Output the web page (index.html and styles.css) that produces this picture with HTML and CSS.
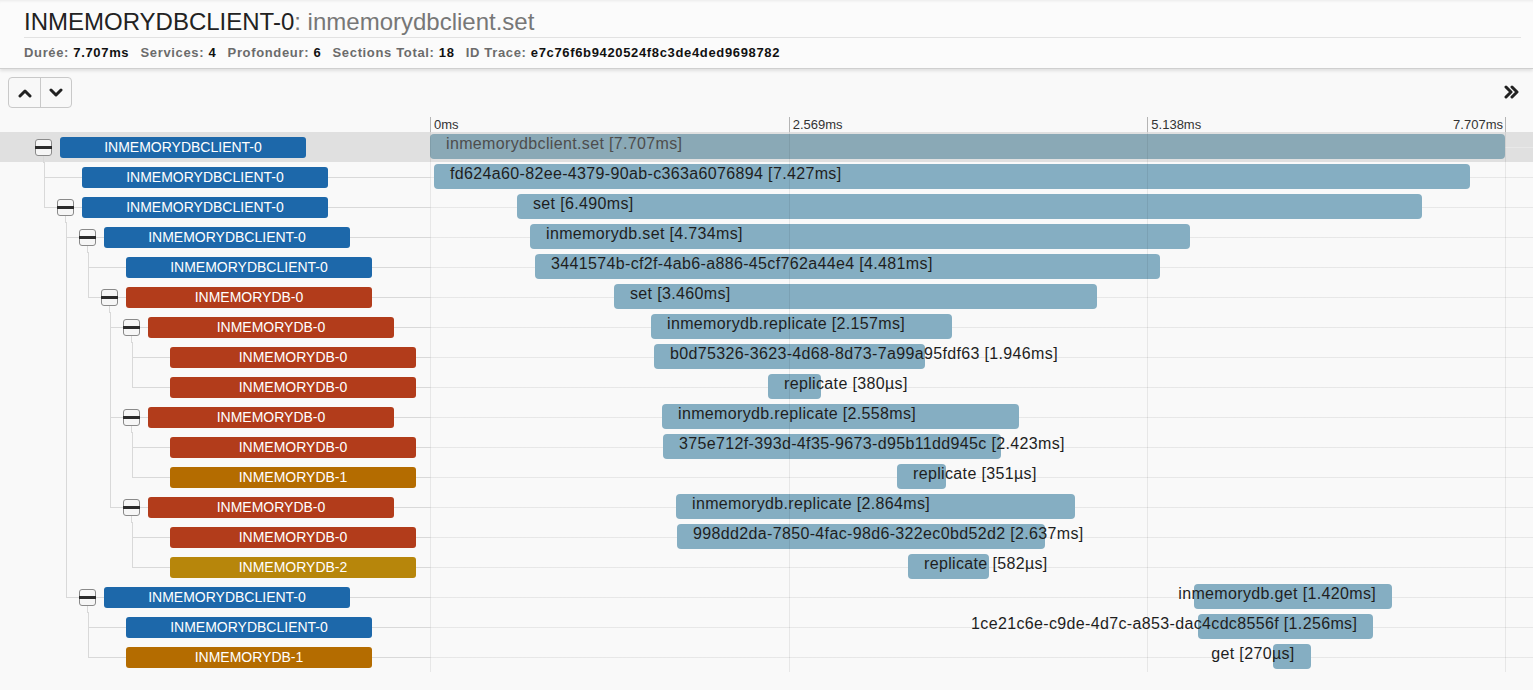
FILE: index.html
```html
<!DOCTYPE html>
<html lang="fr">
<head>
<meta charset="utf-8">
<title>INMEMORYDBCLIENT-0: inmemorydbclient.set</title>
<link rel="stylesheet" href="styles.css">
</head>
<body>
<header class="trace-header">
  <h1 class="trace-title"><span class="title-service">INMEMORYDBCLIENT-0</span><span class="title-span">: inmemorydbclient.set</span></h1>
  <div class="trace-stats">
    <span class="stat"><span class="stat-label">Durée:</span> <span class="stat-value">7.707ms</span></span>
    <span class="stat"><span class="stat-label">Services:</span> <span class="stat-value">4</span></span>
    <span class="stat"><span class="stat-label">Profondeur:</span> <span class="stat-value">6</span></span>
    <span class="stat"><span class="stat-label">Sections Total:</span> <span class="stat-value">18</span></span>
    <span class="stat"><span class="stat-label">ID Trace:</span> <span class="stat-value">e7c76f6b9420524f8c3de4ded9698782</span></span>
  </div>
</header>

<div class="toolbar">
  <div class="btn-group">
    <button class="btn" type="button" aria-label="up"><svg width="14" height="10" viewBox="0 0 14 10"><path d="M2 8 L7 3 L12 8" fill="none" stroke="#222" stroke-width="3" stroke-linecap="round" stroke-linejoin="round"/></svg></button>
    <button class="btn" type="button" aria-label="down"><svg width="14" height="10" viewBox="0 0 14 10"><path d="M2 2 L7 7 L12 2" fill="none" stroke="#222" stroke-width="3" stroke-linecap="round" stroke-linejoin="round"/></svg></button>
  </div>
  <button class="expand-all" type="button" aria-label="expand"><svg width="16" height="14" viewBox="0 0 16 14"><path d="M2 2 L7 7 L2 12 M8 2 L13 7 L8 12" fill="none" stroke="#222" stroke-width="3" stroke-linecap="round" stroke-linejoin="round"/></svg></button>
</div>

<div class="timeline">
  <div class="ruler">
    <div class="ruler-spacer"></div>
    <div class="ruler-ticks">
      <div class="tick"><span>0ms</span></div>
      <div class="tick"><span>2.569ms</span></div>
      <div class="tick tick-last"><span>5.138ms</span><span>7.707ms</span></div>
    </div>
  </div>

  <div class="rows">
    <div class="gridlines"><div></div><div></div><div></div></div>

    <div class="row selected">
      <div class="tree"><div class="node"><span class="expander"></span><span class="svc svc-client">INMEMORYDBCLIENT-0</span></div></div>
      <div class="track"><div class="bar" style="left:0%;width:100%"><span class="bar-text">inmemorydbclient.set [7.707ms]</span></div></div>
      <div class="row-end"></div>
    </div>

    <div class="row">
      <div class="tree"><span class="g g-tee"></span><div class="node"><span class="slot"></span><span class="svc svc-client">INMEMORYDBCLIENT-0</span></div></div>
      <div class="track"><div class="bar" style="left:0.372%;width:96.37%"><span class="bar-text">fd624a60-82ee-4379-90ab-c363a6076894 [7.427ms]</span></div></div>
      <div class="row-end"></div>
    </div>

    <div class="row">
      <div class="tree"><span class="g g-ell"></span><div class="node"><span class="expander"></span><span class="svc svc-client">INMEMORYDBCLIENT-0</span></div></div>
      <div class="track"><div class="bar" style="left:8.093%;width:84.21%"><span class="bar-text">set [6.490ms]</span></div></div>
      <div class="row-end"></div>
    </div>

    <div class="row">
      <div class="tree"><span class="g"></span><span class="g g-tee"></span><div class="node"><span class="expander"></span><span class="svc svc-client">INMEMORYDBCLIENT-0</span></div></div>
      <div class="track"><div class="bar" style="left:9.302%;width:61.42%"><span class="bar-text">inmemorydb.set [4.734ms]</span></div></div>
      <div class="row-end"></div>
    </div>

    <div class="row">
      <div class="tree"><span class="g"></span><span class="g g-pipe"></span><span class="g g-tee"></span><div class="node"><span class="slot"></span><span class="svc svc-client">INMEMORYDBCLIENT-0</span></div></div>
      <div class="track"><div class="bar" style="left:9.767%;width:58.14%"><span class="bar-text">3441574b-cf2f-4ab6-a886-45cf762a44e4 [4.481ms]</span></div></div>
      <div class="row-end"></div>
    </div>

    <div class="row">
      <div class="tree"><span class="g"></span><span class="g g-pipe"></span><span class="g g-ell"></span><div class="node"><span class="expander"></span><span class="svc svc-db0">INMEMORYDB-0</span></div></div>
      <div class="track"><div class="bar" style="left:17.116%;width:44.89%"><span class="bar-text">set [3.460ms]</span></div></div>
      <div class="row-end"></div>
    </div>

    <div class="row">
      <div class="tree"><span class="g"></span><span class="g g-pipe"></span><span class="g"></span><span class="g g-tee"></span><div class="node"><span class="expander"></span><span class="svc svc-db0">INMEMORYDB-0</span></div></div>
      <div class="track"><div class="bar" style="left:20.558%;width:27.99%"><span class="bar-text">inmemorydb.replicate [2.157ms]</span></div></div>
      <div class="row-end"></div>
    </div>

    <div class="row">
      <div class="tree"><span class="g"></span><span class="g g-pipe"></span><span class="g"></span><span class="g g-pipe"></span><span class="g g-tee"></span><div class="node"><span class="slot"></span><span class="svc svc-db0">INMEMORYDB-0</span></div></div>
      <div class="track"><div class="bar" style="left:20.837%;width:25.25%"><span class="bar-text">b0d75326-3623-4d68-8d73-7a99a95fdf63 [1.946ms]</span></div></div>
      <div class="row-end"></div>
    </div>

    <div class="row">
      <div class="tree"><span class="g"></span><span class="g g-pipe"></span><span class="g"></span><span class="g g-pipe"></span><span class="g g-ell"></span><div class="node"><span class="slot"></span><span class="svc svc-db0">INMEMORYDB-0</span></div></div>
      <div class="track"><div class="bar" style="left:31.442%;width:4.93%"><span class="bar-text">replicate [380µs]</span></div></div>
      <div class="row-end"></div>
    </div>

    <div class="row">
      <div class="tree"><span class="g"></span><span class="g g-pipe"></span><span class="g"></span><span class="g g-tee"></span><div class="node"><span class="expander"></span><span class="svc svc-db0">INMEMORYDB-0</span></div></div>
      <div class="track"><div class="bar" style="left:21.581%;width:33.19%"><span class="bar-text">inmemorydb.replicate [2.558ms]</span></div></div>
      <div class="row-end"></div>
    </div>

    <div class="row">
      <div class="tree"><span class="g"></span><span class="g g-pipe"></span><span class="g"></span><span class="g g-pipe"></span><span class="g g-tee"></span><div class="node"><span class="slot"></span><span class="svc svc-db0">INMEMORYDB-0</span></div></div>
      <div class="track"><div class="bar" style="left:21.674%;width:31.44%"><span class="bar-text">375e712f-393d-4f35-9673-d95b11dd945c [2.423ms]</span></div></div>
      <div class="row-end"></div>
    </div>

    <div class="row">
      <div class="tree"><span class="g"></span><span class="g g-pipe"></span><span class="g"></span><span class="g g-pipe"></span><span class="g g-ell"></span><div class="node"><span class="slot"></span><span class="svc svc-db1">INMEMORYDB-1</span></div></div>
      <div class="track"><div class="bar" style="left:43.442%;width:4.56%"><span class="bar-text">replicate [351µs]</span></div></div>
      <div class="row-end"></div>
    </div>

    <div class="row">
      <div class="tree"><span class="g"></span><span class="g g-pipe"></span><span class="g"></span><span class="g g-ell"></span><div class="node"><span class="expander"></span><span class="svc svc-db0">INMEMORYDB-0</span></div></div>
      <div class="track"><div class="bar" style="left:22.884%;width:37.16%"><span class="bar-text">inmemorydb.replicate [2.864ms]</span></div></div>
      <div class="row-end"></div>
    </div>

    <div class="row">
      <div class="tree"><span class="g"></span><span class="g g-pipe"></span><span class="g"></span><span class="g"></span><span class="g g-tee"></span><div class="node"><span class="slot"></span><span class="svc svc-db0">INMEMORYDB-0</span></div></div>
      <div class="track"><div class="bar" style="left:22.977%;width:34.22%"><span class="bar-text">998dd2da-7850-4fac-98d6-322ec0bd52d2 [2.637ms]</span></div></div>
      <div class="row-end"></div>
    </div>

    <div class="row">
      <div class="tree"><span class="g"></span><span class="g g-pipe"></span><span class="g"></span><span class="g"></span><span class="g g-ell"></span><div class="node"><span class="slot"></span><span class="svc svc-db2">INMEMORYDB-2</span></div></div>
      <div class="track"><div class="bar" style="left:44.465%;width:7.55%"><span class="bar-text">replicate [582µs]</span></div></div>
      <div class="row-end"></div>
    </div>

    <div class="row">
      <div class="tree"><span class="g"></span><span class="g g-ell"></span><div class="node"><span class="expander"></span><span class="svc svc-client">INMEMORYDBCLIENT-0</span></div></div>
      <div class="track"><div class="bar bar-end" style="left:71.07%;width:18.43%"><span class="bar-text">inmemorydb.get [1.420ms]</span></div></div>
      <div class="row-end"></div>
    </div>

    <div class="row">
      <div class="tree"><span class="g"></span><span class="g"></span><span class="g g-tee"></span><div class="node"><span class="slot"></span><span class="svc svc-client">INMEMORYDBCLIENT-0</span></div></div>
      <div class="track"><div class="bar bar-end" style="left:71.442%;width:16.3%"><span class="bar-text">1ce21c6e-c9de-4d7c-a853-dac4cdc8556f [1.256ms]</span></div></div>
      <div class="row-end"></div>
    </div>

    <div class="row">
      <div class="tree"><span class="g"></span><span class="g"></span><span class="g g-ell"></span><div class="node"><span class="slot"></span><span class="svc svc-db1">INMEMORYDB-1</span></div></div>
      <div class="track"><div class="bar bar-end" style="left:78.419%;width:3.5%"><span class="bar-text">get [270µs]</span></div></div>
      <div class="row-end"></div>
    </div>
  </div>
</div>
</body>
</html>
```

FILE: styles.css
```css
* { box-sizing: border-box; }

html, body {
  margin: 0;
  padding: 0;
  background: #f9f9f9;
  font-family: "Liberation Sans", Arial, Helvetica, sans-serif;
  color: #222;
  overflow: hidden;
}

/* ---------- header ---------- */
.trace-header {
  background: #fbfbfb;
  padding: 9px 12px 7px 24px;
  border-bottom: 1px solid #cfcfcf;
  box-shadow: 0 2px 3px rgba(0, 0, 0, 0.10), inset 0 3px 3px -2px rgba(0, 0, 0, 0.07);
  position: relative;
  z-index: 2;
}

.trace-title {
  margin: 0;
  font-size: 24px;
  line-height: 26px;
  font-weight: normal;
  padding-bottom: 2px;
  border-bottom: 1px solid #e2e2e2;
  white-space: nowrap;
}

.title-service { color: #222; }
.title-span { color: #777; }

.trace-stats {
  margin-top: 7px;
  font-size: 13px;
  line-height: 16px;
  font-weight: bold;
  letter-spacing: 0.65px;
  white-space: nowrap;
}

.stat { margin-right: 7px; }
.stat-label { color: #6b6b6b; }
.stat-value { color: #111; }

/* ---------- toolbar ---------- */
.toolbar {
  display: flex;
  align-items: flex-start;
  justify-content: space-between;
  padding: 8px 12px 0 8px;
  height: 39px;
}

.btn-group {
  display: flex;
  border: 1px solid #c9c9c9;
  border-radius: 4px;
  background: #f8f8f8;
  height: 31px;
}

.btn {
  width: 31px;
  height: 29px;
  border: 0;
  padding: 0;
  margin: 0;
  background: transparent;
  display: flex;
  align-items: center;
  justify-content: center;
}

.btn + .btn { border-left: 1px solid #c9c9c9; }

.expand-all {
  border: 0;
  background: transparent;
  padding: 0;
  margin-top: 8px;
  width: 18px;
  height: 14px;
  display: flex;
  align-items: center;
  justify-content: center;
}

/* ---------- ruler ---------- */
.ruler {
  display: flex;
  height: 24px;
  padding-top: 9px;
}

.ruler-spacer { width: 430px; flex: none; }

.ruler-ticks {
  width: 1076px;
  flex: none;
  display: grid;
  grid-template-columns: 1fr 1fr 1fr;
}

.tick {
  border-left: 1px solid #b5b5b5;
  font-size: 13px;
  line-height: 15px;
  color: #333;
  padding-left: 3px;
  white-space: nowrap;
}

.tick-last {
  display: flex;
  justify-content: space-between;
  border-right: 1px solid #b5b5b5;
  padding-right: 2px;
}

/* ---------- rows ---------- */
.rows { position: relative; }

.gridlines {
  position: absolute;
  top: 0;
  bottom: 0;
  left: 430px;
  width: 1076px;
  display: grid;
  grid-template-columns: 1fr 1fr 1fr;
  pointer-events: none;
  z-index: 1;
}

.gridlines div { border-left: 1px solid rgba(0, 0, 0, 0.07); }
.gridlines div:last-child { border-right: 1px solid rgba(0, 0, 0, 0.07); }

.row {
  display: flex;
  height: 30px;
}

.row.selected { background: #e0e0e0; }

.tree {
  width: 430px;
  flex: none;
  display: flex;
  padding-left: 33px;
}

.g {
  width: 22px;
  flex: none;
  height: 30px;
}

.g-pipe {
  background: linear-gradient(#d9d9d9, #d9d9d9) 11px 0 / 1px 100% no-repeat;
}

.g-tee {
  background:
    linear-gradient(#d9d9d9, #d9d9d9) 11px 0 / 1px 100% no-repeat,
    linear-gradient(#d9d9d9, #d9d9d9) 11px 15px / 11px 1px no-repeat;
}

.g-ell {
  background:
    linear-gradient(#d9d9d9, #d9d9d9) 11px 0 / 1px 16px no-repeat,
    linear-gradient(#d9d9d9, #d9d9d9) 11px 15px / 11px 1px no-repeat;
}

.node {
  flex: 1;
  display: flex;
  align-items: center;
  background: linear-gradient(#d9d9d9, #d9d9d9) 0 15px / 100% 1px no-repeat;
}

.row.selected .node { background: none; }

.expander,
.slot {
  width: 17px;
  height: 17px;
  margin-left: 2px;
  margin-right: 8px;
  flex: none;
}

.expander {
  position: relative;
  border: 1px solid #8a8a8a;
  border-radius: 3px;
  background: #f6f6f6;
}

.expander::before {
  content: "";
  position: absolute;
  left: -1px;
  right: -1px;
  top: 6px;
  height: 3px;
  background: #2b2b2b;
}

.expander::after {
  content: "";
  position: absolute;
  left: 7px;
  top: 16px;
  width: 1px;
  height: 7px;
  background: #d9d9d9;
}

.svc {
  width: 246px;
  height: 21px;
  border-radius: 3px;
  color: #fff;
  font-size: 14px;
  line-height: 21px;
  text-align: center;
  white-space: nowrap;
  flex: none;
}

.svc-client { background: #1d68aa; }
.svc-db0 { background: #b23c1b; }
.svc-db1 { background: #b46c00; }
.svc-db2 { background: #b7860b; }

.track {
  width: 1075px;
  flex: none;
  position: relative;
  background: linear-gradient(rgba(0, 0, 0, 0.07), rgba(0, 0, 0, 0.07)) 0 15px / 100% 1px no-repeat;
}

.row-end {
  flex: 1;
  background: linear-gradient(rgba(0, 0, 0, 0.07), rgba(0, 0, 0, 0.07)) 0 15px / 100% 1px no-repeat;
}

.row.selected .track,
.row.selected .row-end {
  background: linear-gradient(rgba(255, 255, 255, 0.25), rgba(255, 255, 255, 0.25)) 0 15px / 100% 1px no-repeat;
}

.bar {
  position: absolute;
  top: 2px;
  height: 25px;
  border-radius: 4px;
  background: #85aec2;
  display: flex;
  padding-left: 16px;
  padding-top: 1px;
  white-space: nowrap;
}

.row.selected .bar { background: #8aa9b6; }

.bar-end {
  justify-content: flex-end;
  padding-left: 0;
  padding-right: 16px;
}

.bar-text {
  font-size: 16px;
  line-height: 18px;
  letter-spacing: 0.35px;
  color: #1e1e1e;
  flex: none;
}

.row.selected .bar-text { color: #4d4d4d; }
```
